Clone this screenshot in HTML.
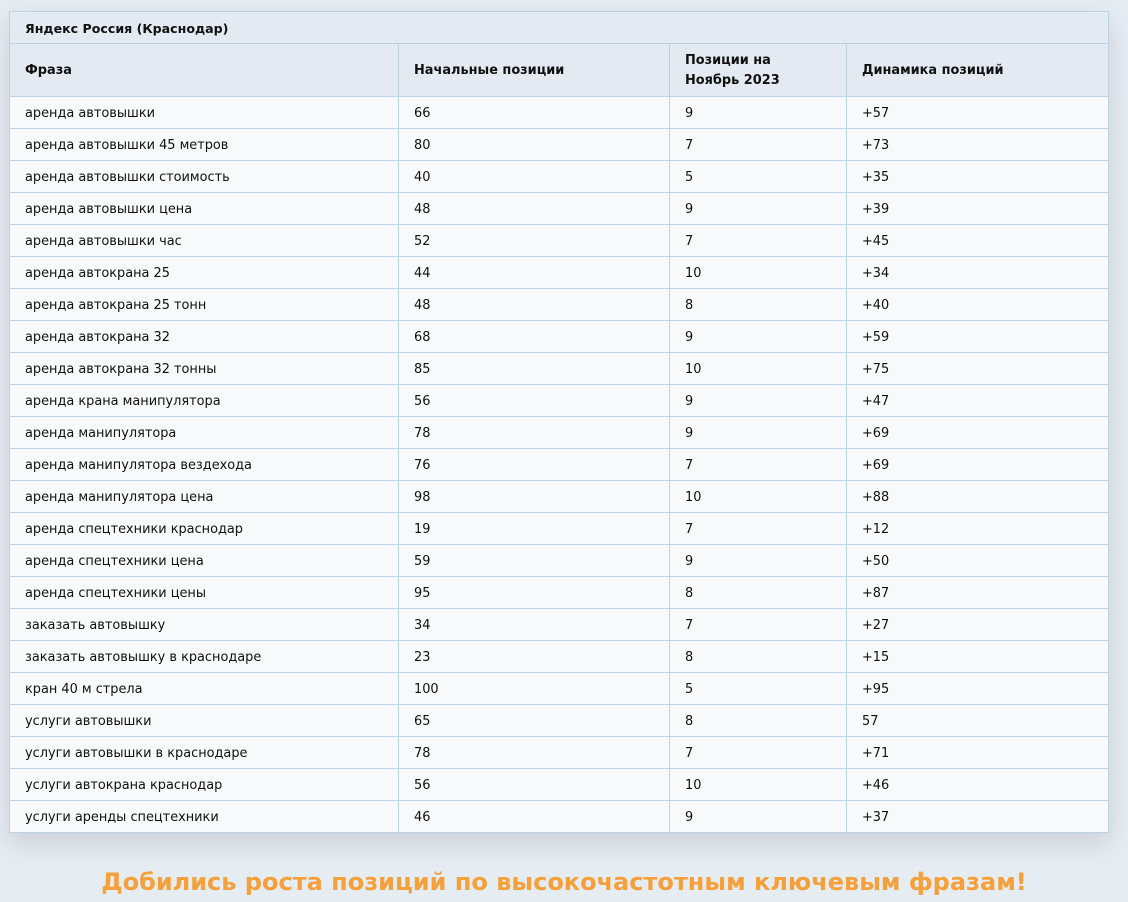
<!DOCTYPE html>
<html><head><meta charset="utf-8"><style>
html,body{margin:0;padding:0}
body{width:1128px;height:902px;background:#e5ecf2;font-family:"DejaVu Sans","Liberation Sans",sans-serif;overflow:hidden;position:relative}
table{position:absolute;left:9px;top:11px;width:1099px;border-collapse:collapse;font-size:12.9px;color:#111;box-shadow:0 10px 25px rgba(0,0,0,0.12);table-layout:fixed}
td,th{border:1px solid #bdd3e3;padding:1px 15px 0;text-align:left;height:30px;background:#f7f9fb}
th{background:#e3eaf1;font-weight:bold}
tr.t th{height:30px;font-size:12.6px}
tr.h th{height:51px;line-height:20px}
h2{position:absolute;left:0;right:0;top:868px;margin:0;text-align:center;color:#f5a03a;font-size:24px;font-weight:bold}
</style></head><body>
<table>
<colgroup><col style="width:389px"><col style="width:271px"><col style="width:177px"><col style="width:262px"></colgroup>
<tr class="t"><th colspan="4">Яндекс Россия (Краснодар)</th></tr>
<tr class="h"><th>Фраза</th><th>Начальные позиции</th><th>Позиции на<br>Ноябрь 2023</th><th>Динамика позиций</th></tr>
<tr><td>аренда автовышки</td><td>66</td><td>9</td><td>+57</td></tr>
<tr><td>аренда автовышки 45 метров</td><td>80</td><td>7</td><td>+73</td></tr>
<tr><td>аренда автовышки стоимость</td><td>40</td><td>5</td><td>+35</td></tr>
<tr><td>аренда автовышки цена</td><td>48</td><td>9</td><td>+39</td></tr>
<tr><td>аренда автовышки час</td><td>52</td><td>7</td><td>+45</td></tr>
<tr><td>аренда автокрана 25</td><td>44</td><td>10</td><td>+34</td></tr>
<tr><td>аренда автокрана 25 тонн</td><td>48</td><td>8</td><td>+40</td></tr>
<tr><td>аренда автокрана 32</td><td>68</td><td>9</td><td>+59</td></tr>
<tr><td>аренда автокрана 32 тонны</td><td>85</td><td>10</td><td>+75</td></tr>
<tr><td>аренда крана манипулятора</td><td>56</td><td>9</td><td>+47</td></tr>
<tr><td>аренда манипулятора</td><td>78</td><td>9</td><td>+69</td></tr>
<tr><td>аренда манипулятора вездехода</td><td>76</td><td>7</td><td>+69</td></tr>
<tr><td>аренда манипулятора цена</td><td>98</td><td>10</td><td>+88</td></tr>
<tr><td>аренда спецтехники краснодар</td><td>19</td><td>7</td><td>+12</td></tr>
<tr><td>аренда спецтехники цена</td><td>59</td><td>9</td><td>+50</td></tr>
<tr><td>аренда спецтехники цены</td><td>95</td><td>8</td><td>+87</td></tr>
<tr><td>заказать автовышку</td><td>34</td><td>7</td><td>+27</td></tr>
<tr><td>заказать автовышку в краснодаре</td><td>23</td><td>8</td><td>+15</td></tr>
<tr><td>кран 40 м стрела</td><td>100</td><td>5</td><td>+95</td></tr>
<tr><td>услуги автовышки</td><td>65</td><td>8</td><td>57</td></tr>
<tr><td>услуги автовышки в краснодаре</td><td>78</td><td>7</td><td>+71</td></tr>
<tr><td>услуги автокрана краснодар</td><td>56</td><td>10</td><td>+46</td></tr>
<tr><td>услуги аренды спецтехники</td><td>46</td><td>9</td><td>+37</td></tr>
</table>
<h2>Добились роста позиций по высокочастотным ключевым фразам!</h2>
</body></html>
